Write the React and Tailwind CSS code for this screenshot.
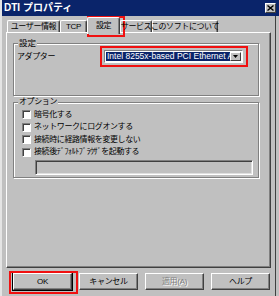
export default function App() {
  const tabs = [
    { label: 'ユーザー情報', w: 'w-[53px]' },
    { label: 'TCP', w: 'w-[27px]' },
    { label: '設定', w: 'w-[33px]', active: true },
    { label: 'サービス', w: 'w-[32px]' },
    { label: 'このソフトについて', w: 'w-[66px]' },
  ];

  const options = [
    '暗号化する',
    'ネットワークにログオンする',
    '接続時に経路情報を変更しない',
    '接続後ﾃﾞﾌｫﾙﾄﾌﾞﾗｳｻﾞを起動する',
  ];

  const btn =
    'h-[17px] w-[59px] flex items-center justify-center bg-[#c0c0c0] border border-t-white border-l-white border-r-[#404040] border-b-[#404040] shadow-[inset_-1px_-1px_0_#808080] text-[8px] tracking-[-0.3px]';

  return (
    <div className="relative w-[279px] h-[296px] overflow-hidden bg-[#c0c0c0] text-black font-['Liberation_Sans','Noto_Sans_CJK_JP',sans-serif] border-l-2 border-l-[#e4e4e4] shadow-[inset_-3px_0_0_#c0c0c0,inset_-4px_0_0_#404040]">
      {/* Title bar */}
      <div className="-ml-[2px] w-[279px] h-[16px] bg-[#0a246a] flex items-center pl-[4px] pr-[3px]">
        <span className="text-white font-bold text-[10px] leading-none">DTI プロパティ</span>
        <div className="ml-auto w-[11px] h-[10px] bg-[#c0c0c0] border border-t-white border-l-white border-r-[#404040] border-b-[#404040] flex items-center justify-center">
          <svg width="7" height="6" viewBox="0 0 7 6">
            <path d="M0.5 0.5 L6.5 5.5 M6.5 0.5 L0.5 5.5" stroke="#000" strokeWidth="1.4" />
          </svg>
        </div>
      </div>

      {/* Tabs */}
      <div className="relative z-10 flex items-start h-[15px] mt-[1px] pl-[5px]">
        {tabs.map((t) => (
          <div
            key={t.label}
            className={`${t.w} ${
              t.active ? 'h-[17px] bg-[#c0c0c0]' : 'mt-[3px] h-[12px]'
            } flex items-center justify-center border-t border-l border-t-white border-l-white border-r border-r-[#404040] rounded-t-[2px] shadow-[inset_-1px_0_0_#808080] text-[8px] tracking-[-0.4px] leading-none whitespace-nowrap`}
          >
            {t.label}
          </div>
        ))}
      </div>

      {/* Tab panel */}
      <div className="ml-[4px] w-[265px] h-[236px] border border-t-white border-l-white border-r-[#404040] border-b-[#404040] shadow-[inset_-1px_-1px_0_#808080] pt-[10px] pl-[6px]">
        {/* 設定 group */}
        <div className="relative w-[246px] h-[53px] border border-[#808080] shadow-[1px_1px_0_#fff,inset_1px_1px_0_#fff]">
          <span className="absolute -top-[6px] left-[4px] px-[1px] bg-[#c0c0c0] text-[8.5px] leading-[10px]">設定</span>
          <div className="flex items-center pt-[6px] pl-[3px]">
            <span className="w-[87px] text-[8px] tracking-[-0.4px] leading-none">アダプター</span>
            <div className="w-[139px] h-[13px] flex border border-t-[#808080] border-l-[#808080] border-r-white border-b-white bg-white p-[1px]">
              <div className="flex-1 bg-[#0a246a] text-white text-[8.5px] leading-[9px] whitespace-nowrap overflow-hidden pl-[1px]">
                Intel 8255x-based PCI Ethernet Adapter
              </div>
              <div className="w-[11px] bg-[#c0c0c0] border border-t-white border-l-white border-r-[#404040] border-b-[#404040] flex items-center justify-center">
                <svg width="5" height="3" viewBox="0 0 5 3">
                  <path d="M0 0 H5 L2.5 3 Z" fill="#000" />
                </svg>
              </div>
            </div>
          </div>
        </div>

        {/* オプション group */}
        <div className="relative mt-[6px] w-[246px] h-[76px] border border-[#808080] shadow-[1px_1px_0_#fff,inset_1px_1px_0_#fff] pt-[5.5px] pl-[8px]">
          <span className="absolute -top-[6px] left-[4px] px-[1px] bg-[#c0c0c0] text-[8px] tracking-[-0.4px] leading-[10px]">オプション</span>
          {options.map((o) => (
            <div key={o} className="h-[12.5px] flex items-center gap-[3px]">
              <div className="w-[9px] h-[9px] bg-white border border-t-[#808080] border-l-[#808080] border-r-white border-b-white shadow-[inset_1px_1px_0_#404040]" />
              <span className="text-[8px] tracking-[-0.4px] leading-none whitespace-nowrap">{o}</span>
            </div>
          ))}
          <div className="mt-[1.5px] ml-[13px] w-[218px] h-[15px] border border-t-[#808080] border-l-[#808080] border-r-white border-b-white shadow-[inset_1px_1px_0_#404040,inset_-1px_-1px_0_#dfdfdf] bg-[#c0c0c0]" />
        </div>
      </div>

      {/* Buttons */}
      <div className="flex gap-[7px] mt-[5px] ml-[11px]">
        <div className={`${btn} outline outline-1 outline-black`}>OK</div>
        <div className={btn}>キャンセル</div>
        <div className={`${btn} text-[#808080] [text-shadow:1px_1px_0_#fff]`}>適用(A)</div>
        <div className={btn}>ヘルプ</div>
      </div>

      {/* Red highlight annotations */}
      <div className="absolute left-[85px] top-[16px] w-[38px] h-[21px] border-2 border-[#f01010]" />
      <div className="absolute left-[98px] top-[46px] w-[148px] h-[21px] border-2 border-[#f01010]" />
      <div className="absolute left-[7px] top-[271px] w-[69px] h-[23px] border-2 border-[#f01010]" />
    </div>
  );
}
